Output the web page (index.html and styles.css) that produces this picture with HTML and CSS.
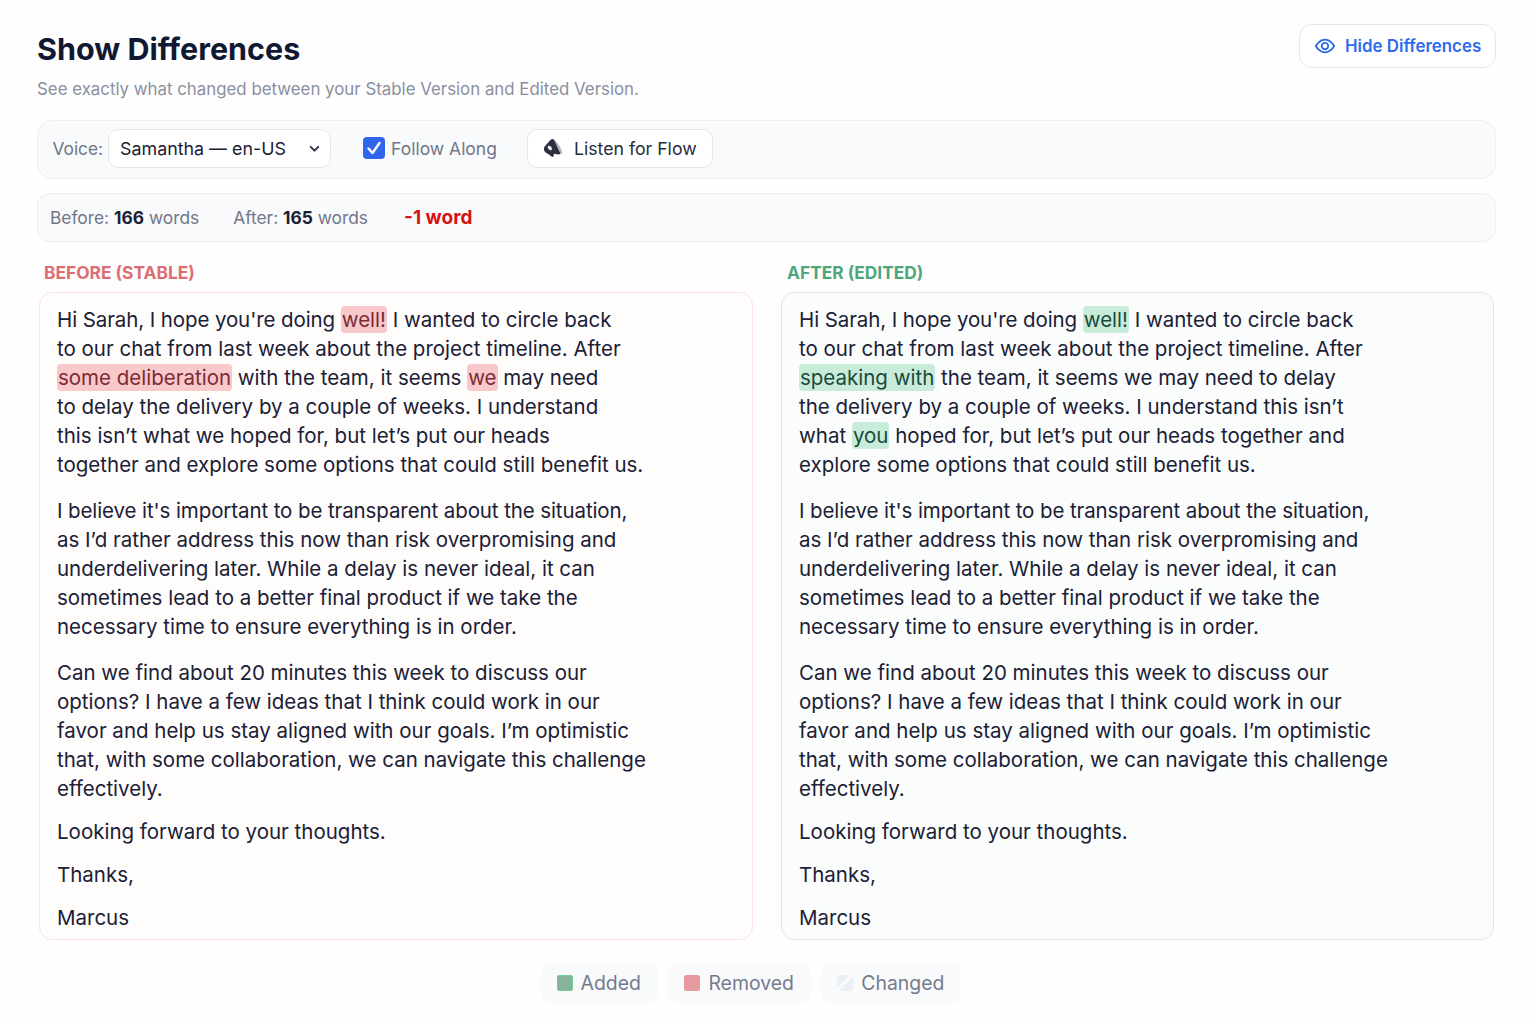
FILE: index.html
```html
<!DOCTYPE html>
<html lang="en">
<head>
<meta charset="utf-8">
<title>Show Differences</title>
<link rel="stylesheet" href="styles.css">
</head>
<body>
<main class="page">
  <header class="head">
    <div class="head-text">
      <h1>Show Differences</h1>
      <p class="sub">See exactly what changed between your Stable Version and Edited Version.</p>
    </div>
    <button class="hide-btn" type="button">
      <svg class="eye" viewBox="0 0 24 24" fill="none" stroke="currentColor" stroke-width="2" stroke-linecap="round" stroke-linejoin="round"><path d="M2 12s3.600-7 10-7 10 7 10 7-3.600 7-10 7-10-7-10-7z"/><circle cx="12" cy="12" r="3.500"/></svg>
      Hide Differences
    </button>
  </header>

  <section class="toolbar">
    <label class="voice"><span class="voice-label">Voice:</span>
      <span class="select"><span class="select-val">Samantha — en-US</span>
        <svg class="chev" viewBox="0 0 12 12" fill="none" stroke="currentColor" stroke-width="1.800" stroke-linecap="round" stroke-linejoin="round"><path d="M2.500 4.500 6 8l3.500-3.500"/></svg>
      </span>
    </label>
    <span class="follow"><span class="check"><svg viewBox="0 0 22 22" fill="none" stroke="#fff" stroke-width="2.400" stroke-linecap="round" stroke-linejoin="round"><path d="M5.500 11.500 9.500 16 16.500 6"/></svg></span>Follow Along</span>
    <button class="listen" type="button">
      <svg class="speaker" viewBox="0 0 22 22"><path fill="#a9b4bf" d="M11 2.500c3.500 2.500 7 8 8.500 13.500l-2 1.200C16 11.500 13 6.500 9.500 4z"/><path fill="#2b3040" d="M2 9 8 2.500c1.200-1 2.400-.7 3 .5l6 12.500c.5 1.200-.2 2.200-1.500 2l-4.500-.7-.5 2.300c-.3 1-1.400 1.200-2.100.5L6 17.500 2.500 15.500C.5 14 .5 10.800 2 9z"/><path fill="#e6e8ec" d="M5 9c1.300-.8 3-.1 3.800 1.800.6 1.500 0 2.700-1.200 2.500C5.500 13 4 10 5 9z"/></svg>
      Listen for Flow
    </button>
  </section>

  <section class="stats">
    <span>Before: <b>166</b> words</span>
    <span>After: <b>165</b> words</span>
    <span class="delta">-1 word</span>
  </section>

  <section class="compare">
    <div class="col">
      <h2 class="label before">BEFORE (STABLE)</h2>
      <article class="panel panel-before">
        <p><span class="tight">Hi Sarah, I hope you're doing</span> <mark class="rem">well!</mark> I wanted to circle back<br>to our chat from last week about the project timeline. After<br><mark class="rem">some deliberation</mark> with the team, it seems <mark class="rem">we</mark> may need<br>to delay the delivery by a couple of weeks. I understand<br>this isn’t what we hoped for, but let’s put our heads<br>together and explore some options that could still benefit us.</p>
        <p><span class="tight">I believe it's important to be transparent about the situation,</span><br>as I’d rather address this now than risk overpromising and<br>underdelivering later. While a delay is never ideal, it can<br>sometimes lead to a better final product if we take the<br>necessary time to ensure everything is in order.</p>
        <p class="short">Can we find about 20 minutes this week to discuss our<br>options? I have a few ideas that I think could work in our<br>favor and help us stay aligned with our goals. I’m optimistic<br>that, with some collaboration, we can navigate this challenge<br>effectively.</p>
        <p class="short">Looking forward to your thoughts.</p>
        <p class="short">Thanks,</p>
        <p class="short">Marcus</p>
      </article>
    </div>
    <div class="col">
      <h2 class="label after">AFTER (EDITED)</h2>
      <article class="panel panel-after">
        <p><span class="tight">Hi Sarah, I hope you're doing</span> <mark class="add">well!</mark> I wanted to circle back<br>to our chat from last week about the project timeline. After<br><mark class="add">speaking with</mark> the team, it seems we may need to delay<br>the delivery by a couple of weeks. I understand this isn’t<br>what <mark class="add">you</mark> hoped for, but let’s put our heads together and<br>explore some options that could still benefit us.</p>
        <p><span class="tight">I believe it's important to be transparent about the situation,</span><br>as I’d rather address this now than risk overpromising and<br>underdelivering later. While a delay is never ideal, it can<br>sometimes lead to a better final product if we take the<br>necessary time to ensure everything is in order.</p>
        <p class="short">Can we find about 20 minutes this week to discuss our<br>options? I have a few ideas that I think could work in our<br>favor and help us stay aligned with our goals. I’m optimistic<br>that, with some collaboration, we can navigate this challenge<br>effectively.</p>
        <p class="short">Looking forward to your thoughts.</p>
        <p class="short">Thanks,</p>
        <p class="short">Marcus</p>
      </article>
    </div>
  </section>

  <footer class="legend">
    <span class="chip"><i class="sw sw-add"></i>Added</span>
    <span class="chip"><i class="sw sw-rem"></i>Removed</span>
    <span class="chip"><i class="sw sw-chg"></i>Changed</span>
  </footer>
</main>
</body>
</html>
```

FILE: styles.css
```css
* { box-sizing: border-box; }
html, body { margin: 0; padding: 0; }
body {
  background: #fefefe;
  color: #1a2035;
  font-family: Inter, "Liberation Sans", sans-serif;
  height: 1023px;
  overflow: hidden;
}
.page { padding: 24px 41px 0 37px; }

.head { display: flex; justify-content: space-between; align-items: flex-start; height: 95.500px; }
h1 { margin: 7px 0 0; font-size: 30.5px; line-height: 36px; font-weight: 700; color: #111831; }
.sub { margin: 11px 0 0; font-size: 16.85px; line-height: 22px; color: #8a8f9e; }
.hide-btn {
  display: flex; align-items: center; gap: 9px;
  height: 44px; width: 197px; padding: 0 0 0 14px;
  background: #fff; border: 1.5px solid #e3e7ef; border-radius: 13px;
  color: #2f6bed; font: 600 16.9px Inter, sans-serif;
}
.eye { width: 22px; height: 22px; }

.toolbar {
  display: flex; align-items: center;
  height: 59px; padding: 0 14.500px 1.500px;
  background: #f9fafb; border: 1.5px solid #eceef2; border-radius: 15px;
  font-size: 17.85px;
}
.voice { display: flex; align-items: center; gap: 5px; color: #6f7484; }
.voice-label { font-size: 17.3px; }
.select {
  display: flex; align-items: center; justify-content: space-between;
  width: 223px; height: 39px; padding: 0 9px 0 11px;
  background: #fff; border: 1.5px solid #e5e7ec; border-radius: 10px;
  color: #1a2035;
}
.chev { width: 13px; height: 13px; color: #30354a; }
.follow { display: flex; align-items: center; gap: 6px; margin-left: 32px; color: #71768a; font-size: 17.5px; }
.check { display: flex; width: 22px; height: 22px; border-radius: 4px; background: #2f64ec; }
.check svg { width: 22px; height: 22px; }
.listen {
  display: flex; align-items: center; gap: 9px;
  height: 39px; width: 186px; margin-left: 30px; padding: 0 0 0 15px;
  background: #fff; border: 1.5px solid #e5e7ec; border-radius: 10px;
  color: #272c40; font: 400 17.7px Inter, sans-serif;
}
.speaker { width: 22px; height: 22px; }

.stats {
  display: flex; align-items: center; gap: 34px;
  height: 49px; margin-top: 14.500px; padding: 0 12px;
  background: #f9fafb; border: 1.5px solid #eceef2; border-radius: 13px;
  font-size: 17.35px; color: #71768a;
}
.stats b { color: #1a2035; font-weight: 700; }
.stats .delta { margin-left: 2px; color: #d61414; font-weight: 700; font-size: 19px; }

.compare { display: grid; grid-template-columns: 714px 713px; gap: 28px; margin: 21px 0 0 2px; }
.label { margin: 0 0 9px 5px; font-size: 17.35px; line-height: 20px; font-weight: 700; }
.label.before { color: #dc6d72; }
.label.after { color: #4ea67c; margin-left: 6px; }
.panel {
  height: 648px; padding: 12px 17px 0;
  border-radius: 13px; font-size: 20.5px; line-height: 29px; color: #1a2035;
}
.panel-before { background: #fffcfc; border: 1.5px solid #fbe2e3; }
.panel-after { background: #fbfcfc; border: 1.5px solid #e2e6ea; }
.panel p { margin: 0 0 17px; }
.panel p.short { margin-bottom: 14px; }
.tight { letter-spacing: -0.1px; }
mark { padding: 1px 1px; border-radius: 4px; color: inherit; }
mark.rem { background: #f8c8ca; color: #7c2a35; }
mark.add { background: #c8ecd9; color: #1a4a3a; }

.legend { display: flex; justify-content: center; gap: 10.500px; margin: 23px 31px 0 0; }
.chip {
  display: flex; align-items: center; gap: 8px;
  height: 40px; padding: 0 17px 0 16px;
  background: #f9fafb; border-radius: 10px;
  font-size: 19.4px; color: #747a8e;
}
.sw { display: block; width: 16px; height: 16px; border-radius: 2px; }
.sw-add { background: #86b39a; border: 1px solid #73cf98; }
.sw-rem { background: #e79aa0; }
.sw-chg { background: linear-gradient(135deg, #eceff4 0 40%, #f9fafb 40% 55%, #eceff4 55%); }
```
